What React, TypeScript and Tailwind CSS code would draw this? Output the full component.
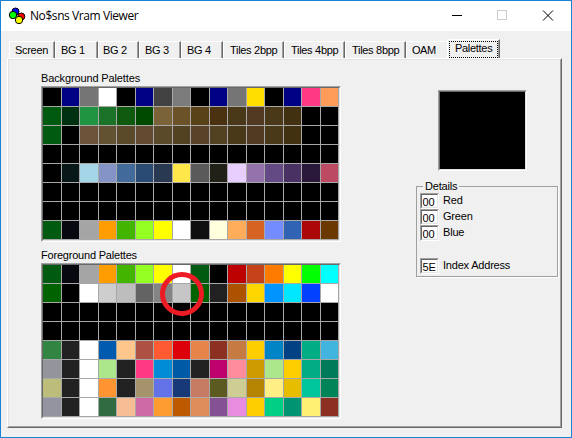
import type { ReactNode } from "react";

const backgroundRows = [
  "000000 000084 757575 ffffff 000000 000084 424242 7b7b7b 000000 000084 757575 ffde00 000000 000084 ff3984 ff9c5a",
  "005a10 003110 219442 1a7329 105a10 004a00 7b6339 6b5229 5a4218 4a3110 4a3918 523921 4a3918 423110 000000 000000",
  "005a10 000000 6b5239 635231 5a4a29 634a31 5a4a29 524221 5a4229 524221 4a3918 523921 4a3918 423110 000000 000000",
  "000000 000000 000000 000000 000000 000000 000000 000000 000000 000000 000000 000000 000000 000000 000000 000000",
  "000000 081818 a5d6e7 8494c6 426b9c 294a73 293952 ffe74a 5a5a5a 212118 e7ceff 9473ad 634a84 4a3163 291839 bd4a63",
  "000000 000000 000000 000000 000000 000000 000000 000000 000000 000000 000000 000000 000000 000000 000000 000000",
  "000000 000000 000000 000000 000000 000000 000000 000000 000000 000000 000000 000000 000000 000000 000000 000000",
  "005a10 080810 a5a5a5 ff9c00 42b500 94ff21 ffff00 ffffff 101010 ffffde ffad5a d66321 738cff 3163b5 ad0808 6b3900",
];

const foregroundRows = [
  "005a10 080810 a5a5a5 ff9c00 42b500 94ff21 ffff00 ffffff 005a10 000000 bd0000 c64218 ff7b00 ffff00 00ff00 00ffff",
  "006300 000000 ffffff cecece bdbdbd 636363 848484 c6c6c6 006300 212121 ad5200 ffd600 0094ff 00e7ff 0042ff ffffff",
  "000000 000000 000000 000000 000000 000000 000000 000000 000000 000000 000000 000000 000000 000000 000000 000000",
  "000000 000000 000000 000000 000000 000000 000000 000000 000000 000000 000000 000000 000000 000000 000000 000000",
  "318442 212121 ffffff 005aad ffc68c ad5242 ff5a31 de0008 e7844a 8c3121 c67b42 ffce00 0084c6 004284 00ad84 42b5de",
  "94949c 212121 ffffff ade78c 212121 ff3984 008cd6 005aa5 212121 bd006b ff8c9c ce9c00 ade78c ffce00 00ad84 007b5a",
  "bdbd7b 212121 ffffff ff9431 212121 a5946b 6373e7 183978 c67b63 5a5a21 cece94 b58400 ffef84 e7bd00 00c69c 008458",
  "9494a0 212121 ffffff 316b42 f7bd94 ce6ba5 ff9c31 bd5a00 de8c5a 845294 e78cde ffce00 00d084 009473 ffef73 8c3121",
];

const tabs = [
  { label: "Screen", box: "w-[46px] pl-[6px]" },
  { label: "BG 1", box: "w-[43px] pl-[6px]" },
  { label: "BG 2", box: "w-[41px] pl-[5px]" },
  { label: "BG 3", box: "w-[42px] pl-[6px]" },
  { label: "BG 4", box: "w-[42px] pl-[6px]" },
  { label: "Tiles 2bpp", box: "w-[61px] pl-[7px]" },
  { label: "Tiles 4bpp", box: "w-[61px] pl-[7px]" },
  { label: "Tiles 8bpp", box: "w-[61px] pl-[7px]" },
];

function PaletteGrid({ rows, children }: { rows: string[]; children?: ReactNode }) {
  return (
    <div className="relative h-[156px] w-[300px] border border-t-[#a0a0a0] border-l-[#a0a0a0] border-r-white border-b-white">
      <div className="h-full border border-t-[#696969] border-l-[#696969] border-r-[#e3e3e3] border-b-[#e3e3e3]">
        <div className="grid grid-cols-[18px_17px_18px_17px_18px_17px_18px_17px_18px_17px_18px_17px_18px_17px_18px_17px] auto-rows-[18px] gap-px bg-[#a8a8a8] pr-px pb-px">
          {rows.flatMap((row, y) =>
            row.split(" ").map((color, x) => (
              <div key={`${y}-${x}`} style={{ backgroundColor: `#${color}` }} />
            )),
          )}
        </div>
      </div>
      {children}
    </div>
  );
}

function Field({ value, label, gap }: { value: string; label: string; gap: string }) {
  return (
    <div className={`flex h-4 ${gap}`}>
      <div className="h-4 w-[19px] border border-t-[#a0a0a0] border-l-[#a0a0a0] border-r-white border-b-white">
        <div className="h-full border border-t-[#696969] border-l-[#696969] border-r-[#e3e3e3] border-b-[#e3e3e3] bg-white pl-[0.5px] leading-[15px]">
          {value}
        </div>
      </div>
      <span className="ml-1 leading-[14px]">{label}</span>
    </div>
  );
}

export default function App() {
  return (
    <div className="flex h-[438px] w-[572px] flex-col border border-[#1883d7] bg-[#f0f0f0] font-['Liberation_Sans',Arial,sans-serif] text-[11px] leading-[13px] tracking-[-0.2px] whitespace-nowrap text-black">
      <header className="flex h-[30px] shrink-0 items-center bg-white">
        <svg className="-mt-px ml-2 size-4 shrink-0 overflow-visible" viewBox="0 0 16 16" stroke="#000" strokeWidth="1">
          <circle cx="6.5" cy="3.5" r="3.5" fill="#0000ff" />
          <circle cx="12.3" cy="8.5" r="3.5" fill="#ff0000" />
          <circle cx="4" cy="7" r="3.7" fill="#00ff00" />
          <circle cx="10" cy="12" r="3.7" fill="#ffff00" />
        </svg>
        <h1 className="ml-[5px] flex-1 font-['Open_Sans','Noto_Sans',sans-serif] text-[12px] leading-4 tracking-[-0.42px]">
          No$sns Vram Viewer
        </h1>
        <svg className="h-[30px] w-[120px]" viewBox="0 0 120 30" fill="none" shapeRendering="crispEdges">
          <path d="M1 14.5h10" stroke="#000" />
          <path d="M46.5 9.5h9v9h-9z" stroke="#ccc" />
          <path d="M92 9.5l10 10M102 9.5l-10 10" stroke="#000" shapeRendering="auto" />
        </svg>
      </header>

      <nav className="flex h-[27px] shrink-0 items-end pl-2">
        {tabs.map((tab) => (
          <div
            key={tab.label}
            className={`h-[17px] rounded-tl-[2px] border-t border-l border-white border-r border-r-[#696969] ${tab.box}`}
          >
            <div className="h-full border-r border-r-[#a0a0a0] pt-[2px]">
              <span className="-ml-px tracking-[-0.3px]">{tab.label}</span>
            </div>
          </div>
        ))}
        <div className="h-[17px] w-[41px] rounded-tl-[2px] border-t border-l border-white pt-[2px] pl-[5px] tracking-[-0.5px]">
          OAM
        </div>
        <div className="-mb-[2px] h-[21px] w-[53px] rounded-tl-[2px] border-t border-l border-white border-r border-r-[#696969] bg-[#f0f0f0]">
          <div className="h-full border-r border-r-[#a0a0a0] pt-px pl-px">
            <div className="h-[17px] w-[49px] border border-dotted border-black pl-[5px] leading-[13px] tracking-[-0.3px]">
              Palettes
            </div>
          </div>
        </div>
      </nav>

      <main className="ml-[6px] h-[370px] w-[555px] border border-t-white border-l-white border-r-[#696969] border-b-[#696969]">
        <div className="flex h-full border border-t-[#e3e3e3] border-l-[#e3e3e3] border-r-[#a0a0a0] border-b-[#a0a0a0]">
          <div className="ml-8 w-[300px] pt-3">
            <h2 className="mb-[1px] h-[13px] tracking-[-0.13px]">Background Palettes</h2>
            <PaletteGrid rows={backgroundRows} />
            <h2 className="mt-[7px] mb-[1px] h-[13px] tracking-[-0.2px]">Foreground Palettes</h2>
            <PaletteGrid rows={foregroundRows}>
              <div className="absolute top-2 left-[118px] size-[44px] rounded-full border-[5px] border-[#ed1c24]" />
            </PaletteGrid>
          </div>

          <aside className="ml-[75px] w-[143px] pt-[30px]">
            <div className="ml-[22px] h-[81px] w-[89px] border border-t-[#a0a0a0] border-l-[#a0a0a0] border-r-white border-b-white">
              <div className="h-full border border-t-[#696969] border-l-[#696969] border-r-[#e3e3e3] border-b-[#e3e3e3] bg-black" />
            </div>
            <fieldset className="mt-[9px] h-[97px] w-[142px] border border-[#a0a0a0] pl-[3px] shadow-[1px_1px_0_#fff]">
              <legend className="ml-[3px] h-[13px] px-[2px]">Details</legend>
              <Field value="00" label="Red" gap="" />
              <Field value="00" label="Green" gap="" />
              <Field value="00" label="Blue" gap="mb-[17px]" />
              <Field value="5E" label="Index Address" gap="" />
            </fieldset>
          </aside>
        </div>
      </main>
    </div>
  );
}
